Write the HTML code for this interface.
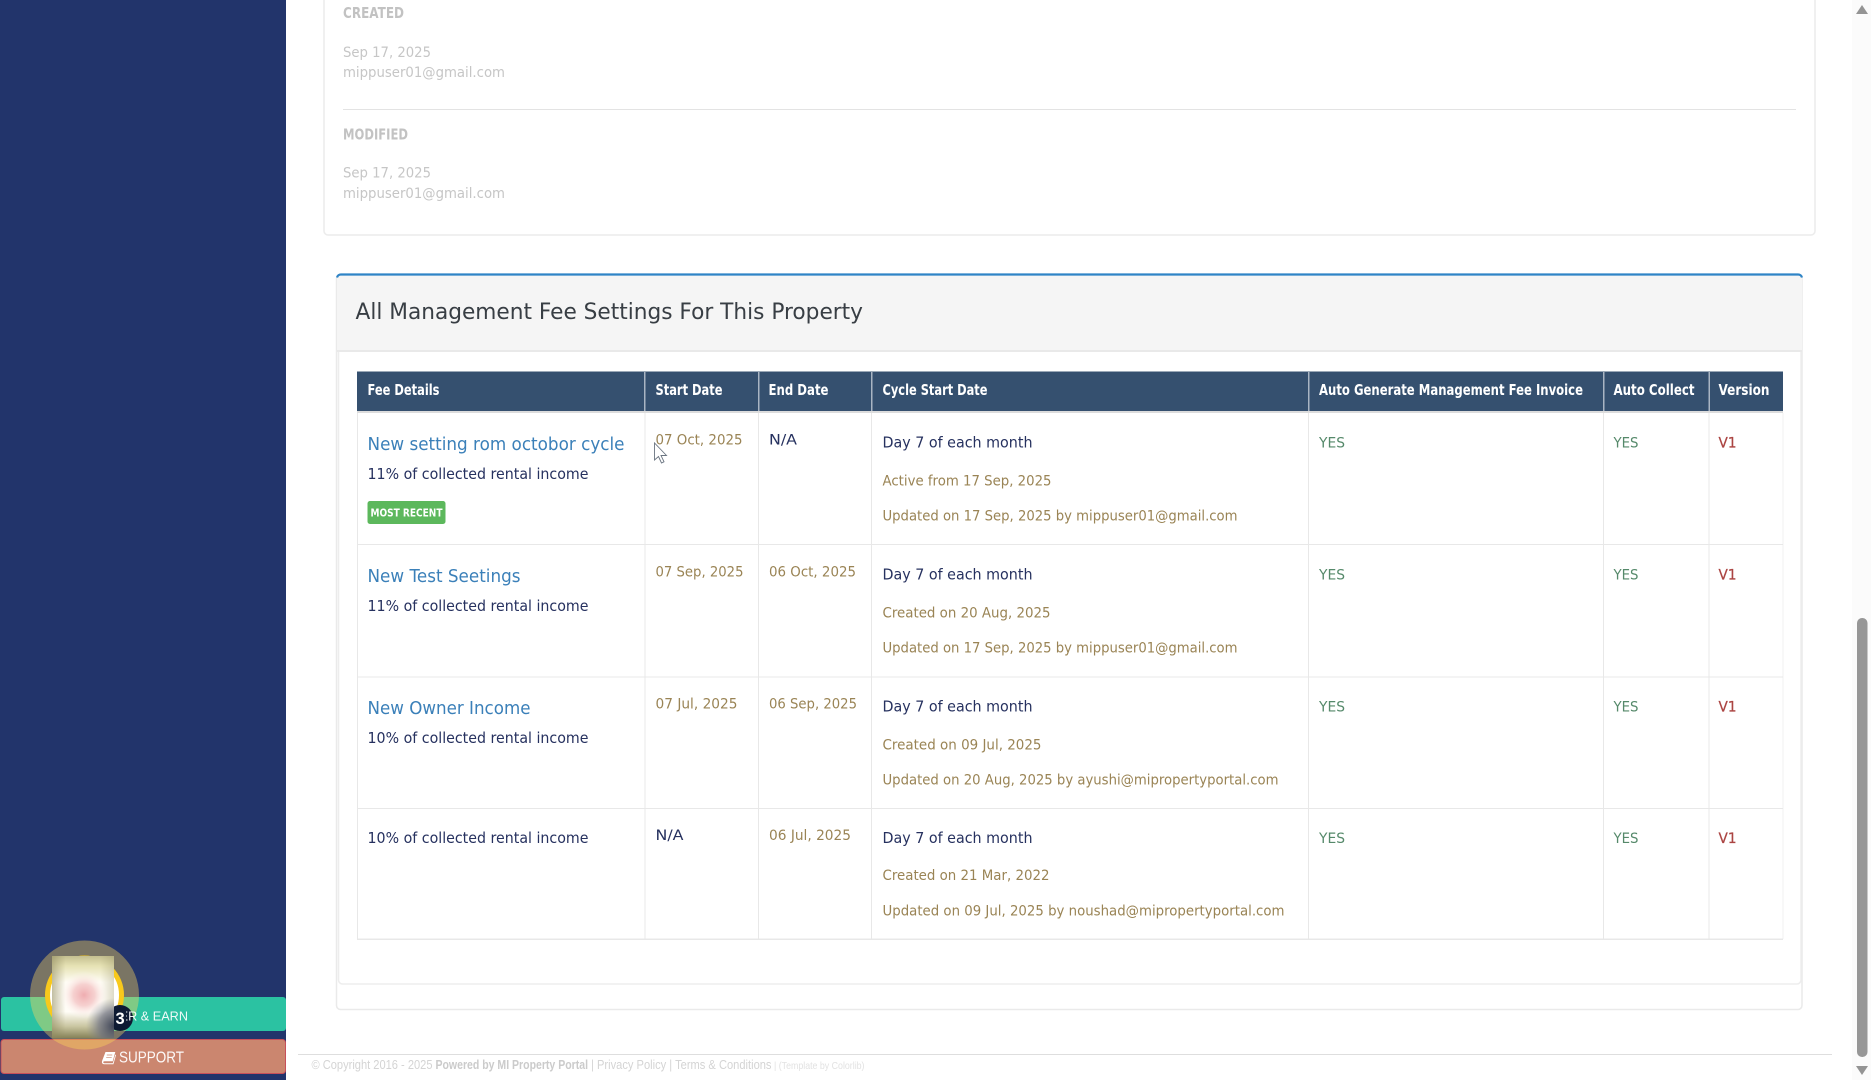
<!DOCTYPE html>
<html lang="en">
<head>
<meta charset="utf-8">
<title>All Management Fee Settings For This Property</title>
<style>
html,body{margin:0;padding:0;width:1871px;height:1080px;overflow:hidden;background:#fff}
svg{display:block;filter:blur(.35px)}
text{font-family:"DejaVu Sans","Liberation Sans",sans-serif;white-space:pre}
.g{fill:#c6c6c6;font-size:14.5px}
.gb{fill:#c2c2c2;font-size:15.5px;font-weight:700}
.th{fill:#fff;font-size:15px;font-weight:700}
.l{fill:#3b80b9;font-size:18px}
.b{fill:#26315f;font-size:15px}
.na{fill:#26315f;font-size:14px}
.t{fill:#9a8455;font-size:14.5px}
.y{fill:#55896a;font-size:14.5px}
.r{fill:#ab4442;font-size:14.5px;stroke:#ab4442;stroke-width:.25px}
.f{font-family:"Liberation Sans",sans-serif;fill:#d4d4d4;font-size:12.5px}
.w{font-family:"Liberation Sans",sans-serif;fill:#fff}
</style>
</head>
<body>
<svg xmlns="http://www.w3.org/2000/svg" width="1871" height="1080" viewBox="0 0 1871 1080">
<defs>
<linearGradient id="avv" x1="0" y1="0" x2="0" y2="1">
<stop offset="0" stop-color="#c4bf90"/>
<stop offset=".12" stop-color="#e6e2b4"/>
<stop offset=".32" stop-color="#fffdf4"/>
<stop offset=".68" stop-color="#fffdf6"/>
<stop offset=".86" stop-color="#c9c5a0"/>
<stop offset="1" stop-color="#868258"/>
</linearGradient>
<linearGradient id="avh" x1="0" y1="0" x2="1" y2="0">
<stop offset="0" stop-color="#8f8a5e" stop-opacity=".55"/>
<stop offset=".22" stop-color="#8f8a5e" stop-opacity="0"/>
<stop offset=".78" stop-color="#8f8a5e" stop-opacity="0"/>
<stop offset="1" stop-color="#8f8a5e" stop-opacity=".3"/>
</linearGradient>
<radialGradient id="avp" gradientUnits="userSpaceOnUse" cx="84" cy="995" r="24">
<stop offset="0" stop-color="#efacb0"/>
<stop offset=".45" stop-color="#f3c2c3" stop-opacity=".75"/>
<stop offset="1" stop-color="#fff" stop-opacity="0"/>
</radialGradient>
<radialGradient id="avd" gradientUnits="userSpaceOnUse" cx="114" cy="1026" r="28">
<stop offset="0" stop-color="#3f4558"/>
<stop offset=".55" stop-color="#6d7080" stop-opacity=".7"/>
<stop offset="1" stop-color="#8a8c94" stop-opacity="0"/>
</radialGradient>
<clipPath id="rc"><rect x="126" y="1000" width="80" height="30"/></clipPath>
</defs>

<rect width="1871" height="1080" fill="#fff"/>
<rect x="1852" width="19" height="1080" fill="#fbfbfb"/>

<!-- sidebar -->
<rect width="286" height="1080" fill="#22346b"/>
<rect x="1" y="997" width="285" height="34" rx="3" fill="#2bc2a2"/>
<rect x="1" y="1039.500" width="284.500" height="34" rx="3" fill="#cb866f" stroke="#c8505a" stroke-width="1"/>
<path d="M105.500 1052h9.800l-2.600 9.300h-8.200c-1.700 0-1.700 1.900 0 1.900h8.300l2.500-8.700.7.600-2.600 9.100h-9.200c-2.200 0-2.600-1.700-2.100-3.300z" fill="#fff"/>
<path d="M106.800 1055h5.500M106.200 1057.300h5.500" stroke="#cb866f" stroke-width=".7"/>
<text class="w" x="119" y="1062.500" font-size="15.500" textLength="65" lengthAdjust="spacingAndGlyphs" fill-opacity=".95">SUPPORT</text>
<circle cx="84.500" cy="995" r="54.500" fill="#ffd75a" fill-opacity=".4"/>
<circle cx="84.500" cy="995" r="37" fill="#fff" stroke="#f8c91c" stroke-width="5"/>
<circle cx="120" cy="1018" r="13" fill="#0e1a33"/>
<text class="w" x="188" y="1020.500" font-size="12.700" text-anchor="end" clip-path="url(#rc)" fill-opacity=".92">REFER &amp; EARN</text>
<rect x="52" y="956" width="62" height="82" fill="url(#avv)"/>
<rect x="52" y="956" width="62" height="82" fill="url(#avh)"/>
<rect x="52" y="956" width="62" height="82" fill="url(#avp)"/>
<rect x="52" y="956" width="62" height="82" fill="url(#avd)"/>
<text class="w" x="115.500" y="1024" font-size="16.500" font-weight="700">3</text>

<!-- top card -->
<path d="M324 -2V231a4 4 0 0 0 4 4H1811a4 4 0 0 0 4-4V-2" fill="none" stroke="#ececec" stroke-width="1.500"/>
<text class="gb" x="343" y="18" textLength="61" lengthAdjust="spacingAndGlyphs">CREATED</text>
<text class="g" x="343" y="57" textLength="88" lengthAdjust="spacingAndGlyphs">Sep 17, 2025</text>
<text class="g" x="343" y="77" textLength="162" lengthAdjust="spacingAndGlyphs">mippuser01@gmail.com</text>
<rect x="343" y="109" width="1453" height="1" fill="#e3e3e3"/>
<text class="gb" x="343" y="139.500" textLength="65" lengthAdjust="spacingAndGlyphs">MODIFIED</text>
<text class="g" x="343" y="177.500" textLength="88" lengthAdjust="spacingAndGlyphs">Sep 17, 2025</text>
<text class="g" x="343" y="198" textLength="162" lengthAdjust="spacingAndGlyphs">mippuser01@gmail.com</text>

<!-- panel -->
<rect x="336.500" y="274.500" width="1465.500" height="735" rx="4" fill="#fff" stroke="#eaeaea" stroke-width="1.500"/>
<path d="M337 351V279a4 4 0 0 1 4-4H1798a4 4 0 0 1 4 4V351z" fill="#f5f5f5"/>
<path d="M337 277.500a4 4 0 0 1 4-3H1798a4 4 0 0 1 4 3" fill="none" stroke="#2f84c6" stroke-width="2.200"/>
<rect x="337" y="350" width="1465" height="2" fill="#e9e9e9"/>
<path d="M338.500 352V980a4 4 0 0 0 4 4H1797a4 4 0 0 0 4-4V352" fill="none" stroke="#ededed" stroke-width="1.500"/>
<text x="355.500" y="319" font-size="22" fill="#383e44" textLength="507.500" lengthAdjust="spacingAndGlyphs">All Management Fee Settings For This Property</text>

<!-- table -->
<rect x="357" y="371.500" width="1426" height="40" fill="#35506f"/>
<rect x="357" y="411" width="1426" height="2" fill="#dcdcdc"/>
<g fill="#a9b5c3">
<rect x="644" y="372" width="1.500" height="39"/><rect x="758" y="372" width="1.500" height="39"/>
<rect x="871" y="372" width="1.500" height="39"/><rect x="1308" y="372" width="1.500" height="39"/>
<rect x="1603" y="372" width="1.500" height="39"/><rect x="1708.500" y="372" width="1.500" height="39"/>
</g>
<g fill="#e8e8e8">
<rect x="357" y="413" width="1" height="526"/>
<rect x="644.500" y="413" width="1" height="526"/><rect x="758" y="413" width="1" height="526"/>
<rect x="871" y="413" width="1" height="526"/><rect x="1308" y="413" width="1" height="526"/>
<rect x="1603" y="413" width="1" height="526"/><rect x="1708.500" y="413" width="1" height="526"/>
<rect x="1782.500" y="413" width="1" height="526" fill="#f0f0f0"/>
<rect x="357" y="544" width="1426" height="1"/><rect x="357" y="676.500" width="1426" height="1"/>
<rect x="357" y="808" width="1426" height="1"/><rect x="357" y="938.500" width="1426" height="1.500"/>
</g>

<g transform="translate(.5 0)">
<text class="th" x="367" y="395" textLength="72" lengthAdjust="spacingAndGlyphs">Fee Details</text>
<text class="th" x="655" y="395" textLength="67" lengthAdjust="spacingAndGlyphs">Start Date</text>
<text class="th" x="768" y="395" textLength="60" lengthAdjust="spacingAndGlyphs">End Date</text>
<text class="th" x="882" y="395" textLength="105" lengthAdjust="spacingAndGlyphs">Cycle Start Date</text>
<text class="th" x="1318.500" y="395" textLength="264" lengthAdjust="spacingAndGlyphs">Auto Generate Management Fee Invoice</text>
<text class="th" x="1613" y="395" textLength="81" lengthAdjust="spacingAndGlyphs">Auto Collect</text>
<text class="th" x="1718" y="395" textLength="51" lengthAdjust="spacingAndGlyphs">Version</text>

<!-- row 1 -->
<text class="l" x="367" y="450" textLength="257" lengthAdjust="spacingAndGlyphs">New setting rom octobor cycle</text>
<text class="b" x="367" y="479" textLength="221" lengthAdjust="spacingAndGlyphs">11% of collected rental income</text>
<text class="t" x="655" y="444.500" textLength="87" lengthAdjust="spacingAndGlyphs">07 Oct, 2025</text>
<text class="na" x="768.500" y="444.500" textLength="28" lengthAdjust="spacingAndGlyphs">N/A</text>
<text class="b" x="882" y="447.500" textLength="150" lengthAdjust="spacingAndGlyphs">Day 7 of each month</text>
<text class="t" x="882" y="485.500" textLength="169" lengthAdjust="spacingAndGlyphs">Active from 17 Sep, 2025</text>
<text class="t" x="882" y="520.500" textLength="355" lengthAdjust="spacingAndGlyphs">Updated on 17 Sep, 2025 by mippuser01@gmail.com</text>
<text class="y" x="1318.500" y="447.500" textLength="26" lengthAdjust="spacingAndGlyphs">YES</text>
<text class="y" x="1613" y="447.500" textLength="25" lengthAdjust="spacingAndGlyphs">YES</text>
<text class="r" x="1718" y="447.500" textLength="18" lengthAdjust="spacingAndGlyphs">V1</text>

<!-- row 2 -->
<text class="l" x="367" y="582" textLength="153" lengthAdjust="spacingAndGlyphs">New Test Seetings</text>
<text class="b" x="367" y="611" textLength="221" lengthAdjust="spacingAndGlyphs">11% of collected rental income</text>
<text class="t" x="655" y="576.500" textLength="88" lengthAdjust="spacingAndGlyphs">07 Sep, 2025</text>
<text class="t" x="768.500" y="576.500" textLength="87" lengthAdjust="spacingAndGlyphs">06 Oct, 2025</text>
<text class="b" x="882" y="579.500" textLength="150" lengthAdjust="spacingAndGlyphs">Day 7 of each month</text>
<text class="t" x="882" y="617.500" textLength="168" lengthAdjust="spacingAndGlyphs">Created on 20 Aug, 2025</text>
<text class="t" x="882" y="652.500" textLength="355" lengthAdjust="spacingAndGlyphs">Updated on 17 Sep, 2025 by mippuser01@gmail.com</text>
<text class="y" x="1318.500" y="579.500" textLength="26" lengthAdjust="spacingAndGlyphs">YES</text>
<text class="y" x="1613" y="579.500" textLength="25" lengthAdjust="spacingAndGlyphs">YES</text>
<text class="r" x="1718" y="579.500" textLength="18" lengthAdjust="spacingAndGlyphs">V1</text>

<!-- row 3 -->
<text class="l" x="367" y="714" textLength="163" lengthAdjust="spacingAndGlyphs">New Owner Income</text>
<text class="b" x="367" y="743" textLength="221" lengthAdjust="spacingAndGlyphs">10% of collected rental income</text>
<text class="t" x="655" y="708.500" textLength="82" lengthAdjust="spacingAndGlyphs">07 Jul, 2025</text>
<text class="t" x="768.500" y="708.500" textLength="88" lengthAdjust="spacingAndGlyphs">06 Sep, 2025</text>
<text class="b" x="882" y="711.500" textLength="150" lengthAdjust="spacingAndGlyphs">Day 7 of each month</text>
<text class="t" x="882" y="749.500" textLength="159" lengthAdjust="spacingAndGlyphs">Created on 09 Jul, 2025</text>
<text class="t" x="882" y="784.500" textLength="396" lengthAdjust="spacingAndGlyphs">Updated on 20 Aug, 2025 by ayushi@mipropertyportal.com</text>
<text class="y" x="1318.500" y="711.500" textLength="26" lengthAdjust="spacingAndGlyphs">YES</text>
<text class="y" x="1613" y="711.500" textLength="25" lengthAdjust="spacingAndGlyphs">YES</text>
<text class="r" x="1718" y="711.500" textLength="18" lengthAdjust="spacingAndGlyphs">V1</text>

<!-- row 4 -->
<text class="b" x="367" y="843" textLength="221" lengthAdjust="spacingAndGlyphs">10% of collected rental income</text>
<text class="na" x="655" y="840" textLength="28" lengthAdjust="spacingAndGlyphs">N/A</text>
<text class="t" x="768.500" y="840" textLength="82" lengthAdjust="spacingAndGlyphs">06 Jul, 2025</text>
<text class="b" x="882" y="843" textLength="150" lengthAdjust="spacingAndGlyphs">Day 7 of each month</text>
<text class="t" x="882" y="880" textLength="167" lengthAdjust="spacingAndGlyphs">Created on 21 Mar, 2022</text>
<text class="t" x="882" y="915.500" textLength="402" lengthAdjust="spacingAndGlyphs">Updated on 09 Jul, 2025 by noushad@mipropertyportal.com</text>
<text class="y" x="1318.500" y="843" textLength="26" lengthAdjust="spacingAndGlyphs">YES</text>
<text class="y" x="1613" y="843" textLength="25" lengthAdjust="spacingAndGlyphs">YES</text>
<text class="r" x="1718" y="843" textLength="18" lengthAdjust="spacingAndGlyphs">V1</text>
</g>

<!-- badge -->
<rect x="367.500" y="501" width="78" height="23" rx="2.500" fill="#5cb85c"/>
<text x="370.500" y="516.500" font-size="11" font-weight="700" fill="#fff" textLength="72" lengthAdjust="spacingAndGlyphs">MOST RECENT</text>

<!-- cursor -->
<path d="M654.500 443v17l4-3.500 3 6.500 2.500-1.200-3-6.300h5.500z" fill="#fff" stroke="#6a7480" stroke-width=".9"/>

<!-- footer -->
<rect x="298" y="1054" width="1534" height="1" fill="#dedede"/>
<text class="f" x="311.500" y="1069" textLength="121" lengthAdjust="spacingAndGlyphs">© Copyright 2016 - 2025</text>
<text class="f" x="435.500" y="1069" font-weight="700" style="fill:#cbcbcb" textLength="152.500" lengthAdjust="spacingAndGlyphs">Powered by MI Property Portal</text>
<text class="f" x="591" y="1069" textLength="180.500" lengthAdjust="spacingAndGlyphs">| Privacy Policy | Terms &amp; Conditions</text>
<text class="f" x="774" y="1069" style="fill:#e2e2e2;font-size:10.500px" textLength="90.500" lengthAdjust="spacingAndGlyphs">| (Template by Colorlib)</text>

<!-- scrollbar -->
<path d="M1862 5l6 9h-12z" fill="#949494"/>
<rect x="1857" y="618" width="10.500" height="439" rx="5" fill="#979797"/>
<path d="M1862 1075l-6-9h12z" fill="#949494"/>
</svg>
</body>
</html>
